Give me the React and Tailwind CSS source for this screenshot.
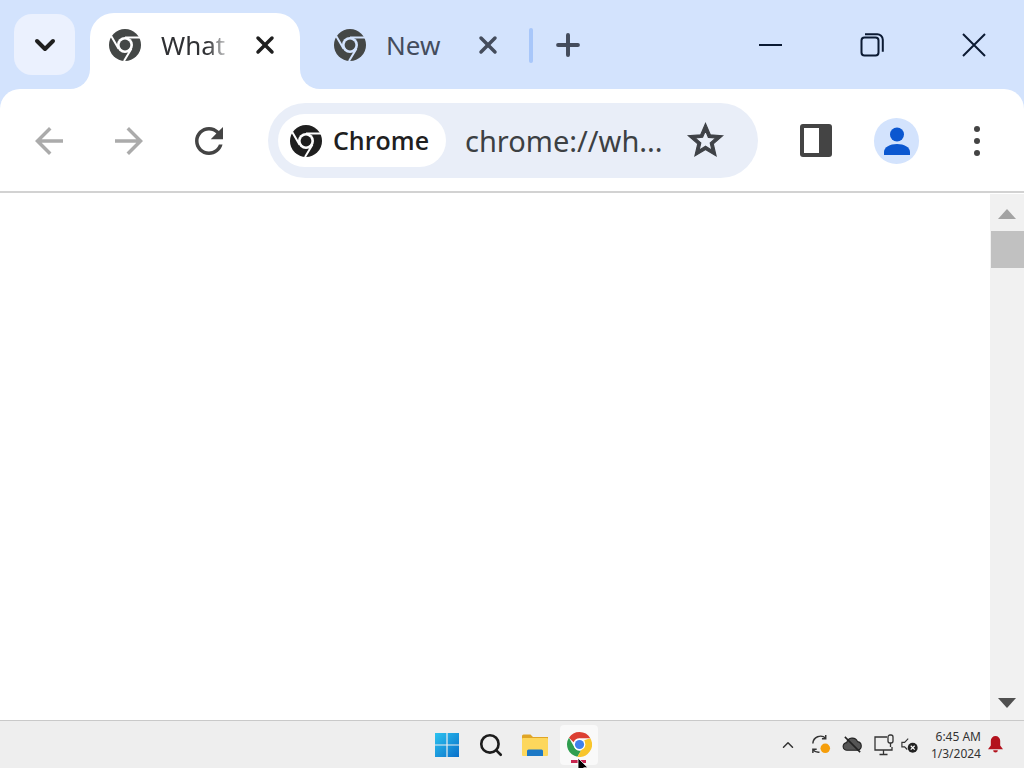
import { Plus, X, ChevronDown, ChevronUp, Search } from "lucide-react";

const ChromeMark = ({ className, dark = "#444746", gap = "#ffffff" }) => (
  <svg viewBox="0 0 32 32" className={className}>
    <circle cx="16" cy="16" r="16" fill={dark} />
    <circle cx="16" cy="16" r="8" fill={gap} />
    <circle cx="16" cy="16" r="5.4" fill={dark} />
    <path d="M16 8.6 L31 8.6 M9.6 19.8 L2.2 7 M22.4 19.8 L15 32" stroke={gap} strokeWidth="2" fill="none" />
  </svg>
);

const ChromeColor = ({ className }) => (
  <svg viewBox="0 0 24 24" className={className}>
    <path d="M12 0a12 12 0 0 1 10.4 6H12a6 6 0 0 0-5.6 3.8L1.9 5.5A12 12 0 0 1 12 0z" fill="#dc3f32" />
    <path d="M1.9 5.5l5 8.9a6 6 0 0 0 6.7 3.4L10 23.8A12 12 0 0 1 1.9 5.5z" fill="#2f9e4f" />
    <path d="M22.4 6A12 12 0 0 1 10 23.8l4.6-7.9A6 6 0 0 0 16.5 8z" fill="#f8c52c" />
    <circle cx="12" cy="12" r="5.6" fill="#ffffff" />
    <circle cx="12" cy="12" r="4.4" fill="#3f80ec" />
  </svg>
);

const TabFlare = ({ side }) =>
  side === "left" ? (
    <div className="absolute bottom-0 left-[-20px] h-[24px] w-[20px] bg-white">
      <div className="h-full w-full rounded-br-[20px] bg-[#d3e3fd]" />
    </div>
  ) : (
    <div className="absolute bottom-0 right-[-20px] h-[24px] w-[20px] bg-white">
      <div className="h-full w-full rounded-bl-[20px] bg-[#d3e3fd]" />
    </div>
  );

const TitleBar = () => (
  <div className="flex h-[89px] shrink-0 items-start pl-[14px]">
    <button className="relative z-20 mt-[14px] flex h-[61px] w-[61px] items-center justify-center rounded-[18px] bg-[#ebf1fe] text-[#1f1f1f]">
      <ChevronDown className="h-[32px] w-[32px]" strokeWidth={3} />
    </button>

    {/* active tab */}
    <div className="relative z-10 ml-[15px] mt-[13px] flex h-[76px] w-[210px] items-center rounded-t-[24px] bg-white pb-[12px] pl-[19px]">
      <TabFlare side="left" />
      <TabFlare side="right" />
      <ChromeMark className="h-[32px] w-[32px] shrink-0" />
      <span className="ml-[20px] w-[66px] whitespace-nowrap text-[26px] leading-none text-[#303134] [mask-image:linear-gradient(to_right,black_70%,rgba(0,0,0,0.2)_100%)]">
        What'
      </span>
      <X className="ml-[24px] h-[28px] w-[28px] shrink-0 text-[#1f1f1f]" strokeWidth={3} />
    </div>

    {/* inactive tab */}
    <div className="ml-[15px] mt-[13px] flex h-[76px] w-[200px] items-center pb-[12px] pl-[19px]">
      <ChromeMark className="h-[32px] w-[32px] shrink-0" gap="#d3e3fd" />
      <span className="ml-[20px] w-[66px] whitespace-nowrap text-[26px] leading-none text-[#444c5c]">
        New
      </span>
      <X className="ml-[22px] h-[28px] w-[28px] shrink-0 text-[#444c5c]" strokeWidth={3} />
    </div>

    <div className="ml-[14px] mt-[28px] h-[35px] w-[4px] rounded-sm bg-[#a8c7fa]" />
    <Plus className="ml-[18px] mt-[28px] h-[34px] w-[34px] text-[#444c5c]" strokeWidth={2.8} />

    <div className="ml-auto mr-[-1px] flex h-[89px] text-[#0b1a33]">
      <div className="flex h-[89px] w-[102px] items-center justify-center">
        <div className="h-[2px] w-[23px] bg-[#0b1a33]" />
      </div>
      <div className="flex h-[89px] w-[102px] items-center justify-center">
        <svg viewBox="0 0 24 24" className="h-[24px] w-[24px]" fill="none" stroke="#0b1a33" strokeWidth="2">
          <rect x="1.5" y="4.5" width="17" height="18" rx="3" />
          <path d="M5 1.2h12a5.5 5.5 0 0 1 5.8 5.5v12" />
        </svg>
      </div>
      <div className="flex h-[89px] w-[102px] items-center justify-center">
        <svg viewBox="0 0 24 24" className="h-[24px] w-[24px]" fill="none" stroke="#0b1a33" strokeWidth="2">
          <path d="M1 1l22 22M23 1L1 23" />
        </svg>
      </div>
    </div>
  </div>
);

const Toolbar = () => (
  <div className="flex h-[104px] shrink-0 items-center rounded-t-[20px] border-b-2 border-b-[#d2d2d2] bg-white pt-[1px]">
    <div className="flex w-[268px] shrink-0 items-center">
      <svg viewBox="0 0 24 24" className="ml-[28px] h-[42px] w-[42px]" fill="#ababab">
        <path d="M20 11H7.83l5.59-5.59L12 4l-8 8 8 8 1.41-1.41L7.83 13H20v-2z" />
      </svg>
      <svg viewBox="0 0 24 24" className="ml-[38px] h-[42px] w-[42px]" fill="#ababab">
        <path d="M12 4l-1.41 1.41L16.17 11H4v2h12.17l-5.58 5.59L12 20l8-8z" />
      </svg>
      <svg viewBox="0 0 24 24" className="ml-[38px] h-[42px] w-[42px]" fill="#444444">
        <path d="M17.65 6.35C16.2 4.9 14.21 4 12 4c-4.42 0-7.99 3.58-7.99 8s3.57 8 7.99 8c3.73 0 6.84-2.55 7.73-6h-2.08c-.82 2.33-3.04 4-5.65 4-3.31 0-6-2.69-6-6s2.69-6 6-6c1.66 0 3.14.69 4.22 1.78L13 11h7V4l-2.35 2.35z" />
      </svg>
    </div>

    <div className="flex h-[75px] w-[490px] shrink-0 items-center rounded-full bg-[#e9eef8] pl-[10px]">
      <div className="flex h-[53px] w-[168px] shrink-0 items-center rounded-full bg-white pl-[12px]">
        <ChromeMark className="h-[32px] w-[32px] shrink-0" dark="#1f1f1f" />
        <span className="ml-[11px] font-['Open_Sans',sans-serif] text-[25px] font-semibold leading-none text-[#1f1f1f]">
          Chrome
        </span>
      </div>
      <span className="ml-[19px] w-[198px] shrink-0 whitespace-nowrap text-[29px] leading-none text-[#3c4043]">
        chrome://wh...
      </span>
      <svg viewBox="0 0 24 24" className="ml-[22px] h-[41px] w-[41px] shrink-0" fill="#3f4247" stroke="#3f4247" strokeWidth="0.7">
        <path d="M22 9.24l-7.19-.62L12 2 9.19 8.63 2 9.24l5.46 4.73L5.82 21 12 17.27 18.18 21l-1.63-7.03L22 9.24zM12 15.4l-3.76 2.27 1-4.28-3.32-2.88 4.38-.38L12 6.1l1.71 4.04 4.38.38-3.32 2.88 1 4.28L12 15.4z" />
      </svg>
    </div>

    <svg viewBox="0 0 32 33" className="ml-[42px] h-[33px] w-[32px] shrink-0">
      <rect x="0" y="0" width="32" height="33" rx="3" fill="#444444" />
      <rect x="4" y="4" width="15" height="25" fill="#ffffff" />
    </svg>

    <div className="ml-[42px] flex h-[46px] w-[45px] shrink-0 items-center justify-center rounded-full bg-[#d3e3fd]">
      <svg viewBox="0 0 26 28" className="h-[28px] w-[26px]" fill="#0b57d0">
        <circle cx="13" cy="7.5" r="7" />
        <path d="M0 28v-3c0-5 6-8 13-8s13 3 13 8v3z" />
      </svg>
    </div>

    <div className="ml-[55px] flex flex-col gap-[6px]">
      <div className="h-[6px] w-[6px] rounded-full bg-[#444444]" />
      <div className="h-[6px] w-[6px] rounded-full bg-[#444444]" />
      <div className="h-[6px] w-[6px] rounded-full bg-[#444444]" />
    </div>
  </div>
);

const Scrollbar = () => (
  <div className="flex w-[34px] shrink-0 flex-col items-center bg-[#f1f1f1]">
    <div className="mt-[15px] h-0 w-0 border-x-[9px] border-b-[10px] border-x-transparent border-b-[#a3a3a3]" />
    <div className="mt-[12px] ml-[1px] h-[37px] w-[33px] bg-[#c1c1c1]" />
    <div className="mt-auto mb-[12px] h-0 w-0 border-x-[9px] border-t-[10px] border-x-transparent border-t-[#505050]" />
  </div>
);

const Taskbar = () => (
  <div className="flex h-[48px] shrink-0 items-center border-t border-t-[#c9c9c9] bg-[#eeeeee]">
    <div className="ml-[425px] flex items-center">
      <div className="flex h-[40px] w-[44px] items-center justify-center">
        <svg viewBox="0 0 24 24" className="h-[24px] w-[24px]">
          <defs>
            <linearGradient id="win" x1="0" y1="0" x2="1" y2="1">
              <stop offset="0" stopColor="#2cc3f0" />
              <stop offset="1" stopColor="#0a6fc9" />
            </linearGradient>
          </defs>
          <path d="M0 0h11.4v11.4H0zM12.6 0H24v11.4H12.6zM0 12.6h11.4V24H0zM12.6 12.6H24V24H12.6z" fill="url(#win)" />
        </svg>
      </div>
      <div className="flex h-[40px] w-[44px] items-center justify-center">
        <Search className="h-[26px] w-[26px] text-[#1c1c1c]" strokeWidth={2.4} />
      </div>
      <div className="flex h-[40px] w-[44px] items-center justify-center">
        <svg viewBox="0 0 26 22" className="h-[22px] w-[26px]">
          <path d="M0 2a1.5 1.5 0 0 1 1.5-1.5h7L11 3h15v4H0z" fill="#e0a526" />
          <rect x="0" y="4" width="26" height="18" rx="1" fill="#fdd75c" />
          <path d="M5 22v-5a1.5 1.5 0 0 1 1.5-1.5h13A1.5 1.5 0 0 1 21 17v5z" fill="#1c78c5" />
        </svg>
      </div>
      <div className="relative ml-[3px] flex h-[40px] w-[38px] items-center justify-center rounded-sm bg-[#f9f9f9] pb-[1px]">
        <ChromeColor className="h-[25px] w-[25px]" />
        <div className="absolute bottom-[2px] left-[11px] h-[3px] w-[15px] bg-[#c8254f]" />
        <svg viewBox="0 0 12 18" className="absolute left-[17px] top-[32px] h-[18px] w-[12px]">
          <path d="M1 1v14l3.5-3.4 2.6 5.4 2.2-1-2.6-5.2H11z" fill="#000000" stroke="#ffffff" strokeWidth="0.8" />
        </svg>
      </div>
    </div>

    <div className="ml-[181px] flex items-center">
      <ChevronUp className="h-[18px] w-[18px] text-[#333333]" strokeWidth={2} />
      <svg viewBox="0 0 22 22" className="ml-[13px] h-[21px] w-[21px]" fill="none" stroke="#333333" strokeWidth="1.5">
        <path d="M3 10a8 8 0 0 1 13.5-5.5M16.5 1v4h-4M3 20v-4h4M3 16.5A8 8 0 0 0 10 19" />
        <circle cx="16" cy="15" r="5" fill="#f59e0b" stroke="none" />
      </svg>
      <svg viewBox="0 0 22 22" className="ml-[11px] h-[21px] w-[21px]">
        <path d="M5.5 17a4 4 0 0 1-.6-8 6 6 0 0 1 11.4-1 4.6 4.6 0 0 1 .4 9z" fill="#555555" stroke="#222222" strokeWidth="1.2" />
        <path d="M3 3l16 16" stroke="#222222" strokeWidth="1.6" />
      </svg>
      <svg viewBox="0 0 22 22" className="ml-[10px] h-[22px] w-[22px]" fill="none" stroke="#333333" strokeWidth="1.3">
        <path d="M14 3H2v13h17v-3M10.5 16v4M6.5 20.5h8" />
        <rect x="15" y="1" width="5" height="8" rx="2" />
        <path d="M17.5 9v4" />
      </svg>
      <svg viewBox="0 0 20 20" className="ml-[6px] h-[18px] w-[18px]">
        <path d="M8 3L4 7H1v5h3l3 3" fill="none" stroke="#333333" strokeWidth="1.3" />
        <circle cx="13" cy="13" r="5.5" fill="#222222" />
        <path d="M10.8 10.8l4.4 4.4M15.2 10.8l-4.4 4.4" stroke="#ffffff" strokeWidth="1.3" />
      </svg>
      <div className="ml-[-1px] flex w-[63px] flex-col items-end text-[12px] leading-[17px] text-[#333333]">
        <span>6:45 AM</span>
        <span>1/3/2024</span>
      </div>
      <svg viewBox="0 0 16 18" className="ml-[7px] h-[17px] w-[15px]" fill="#b3121d">
        <path d="M8 0a5 5 0 0 1 5 5v5l3 4H0l3-4V5a5 5 0 0 1 5-5zM5.5 15h5a2.5 2.5 0 0 1-5 0z" />
      </svg>
    </div>
  </div>
);

export default function App() {
  return (
    <div className="flex h-screen w-full flex-col overflow-hidden bg-[#d3e3fd] font-['Noto_Sans','Open_Sans',sans-serif]">
      <TitleBar />
      <Toolbar />
      <div className="flex min-h-0 flex-1 bg-white pt-[1px]">
        <div className="flex-1" />
        <Scrollbar />
      </div>
      <Taskbar />
    </div>
  );
}
